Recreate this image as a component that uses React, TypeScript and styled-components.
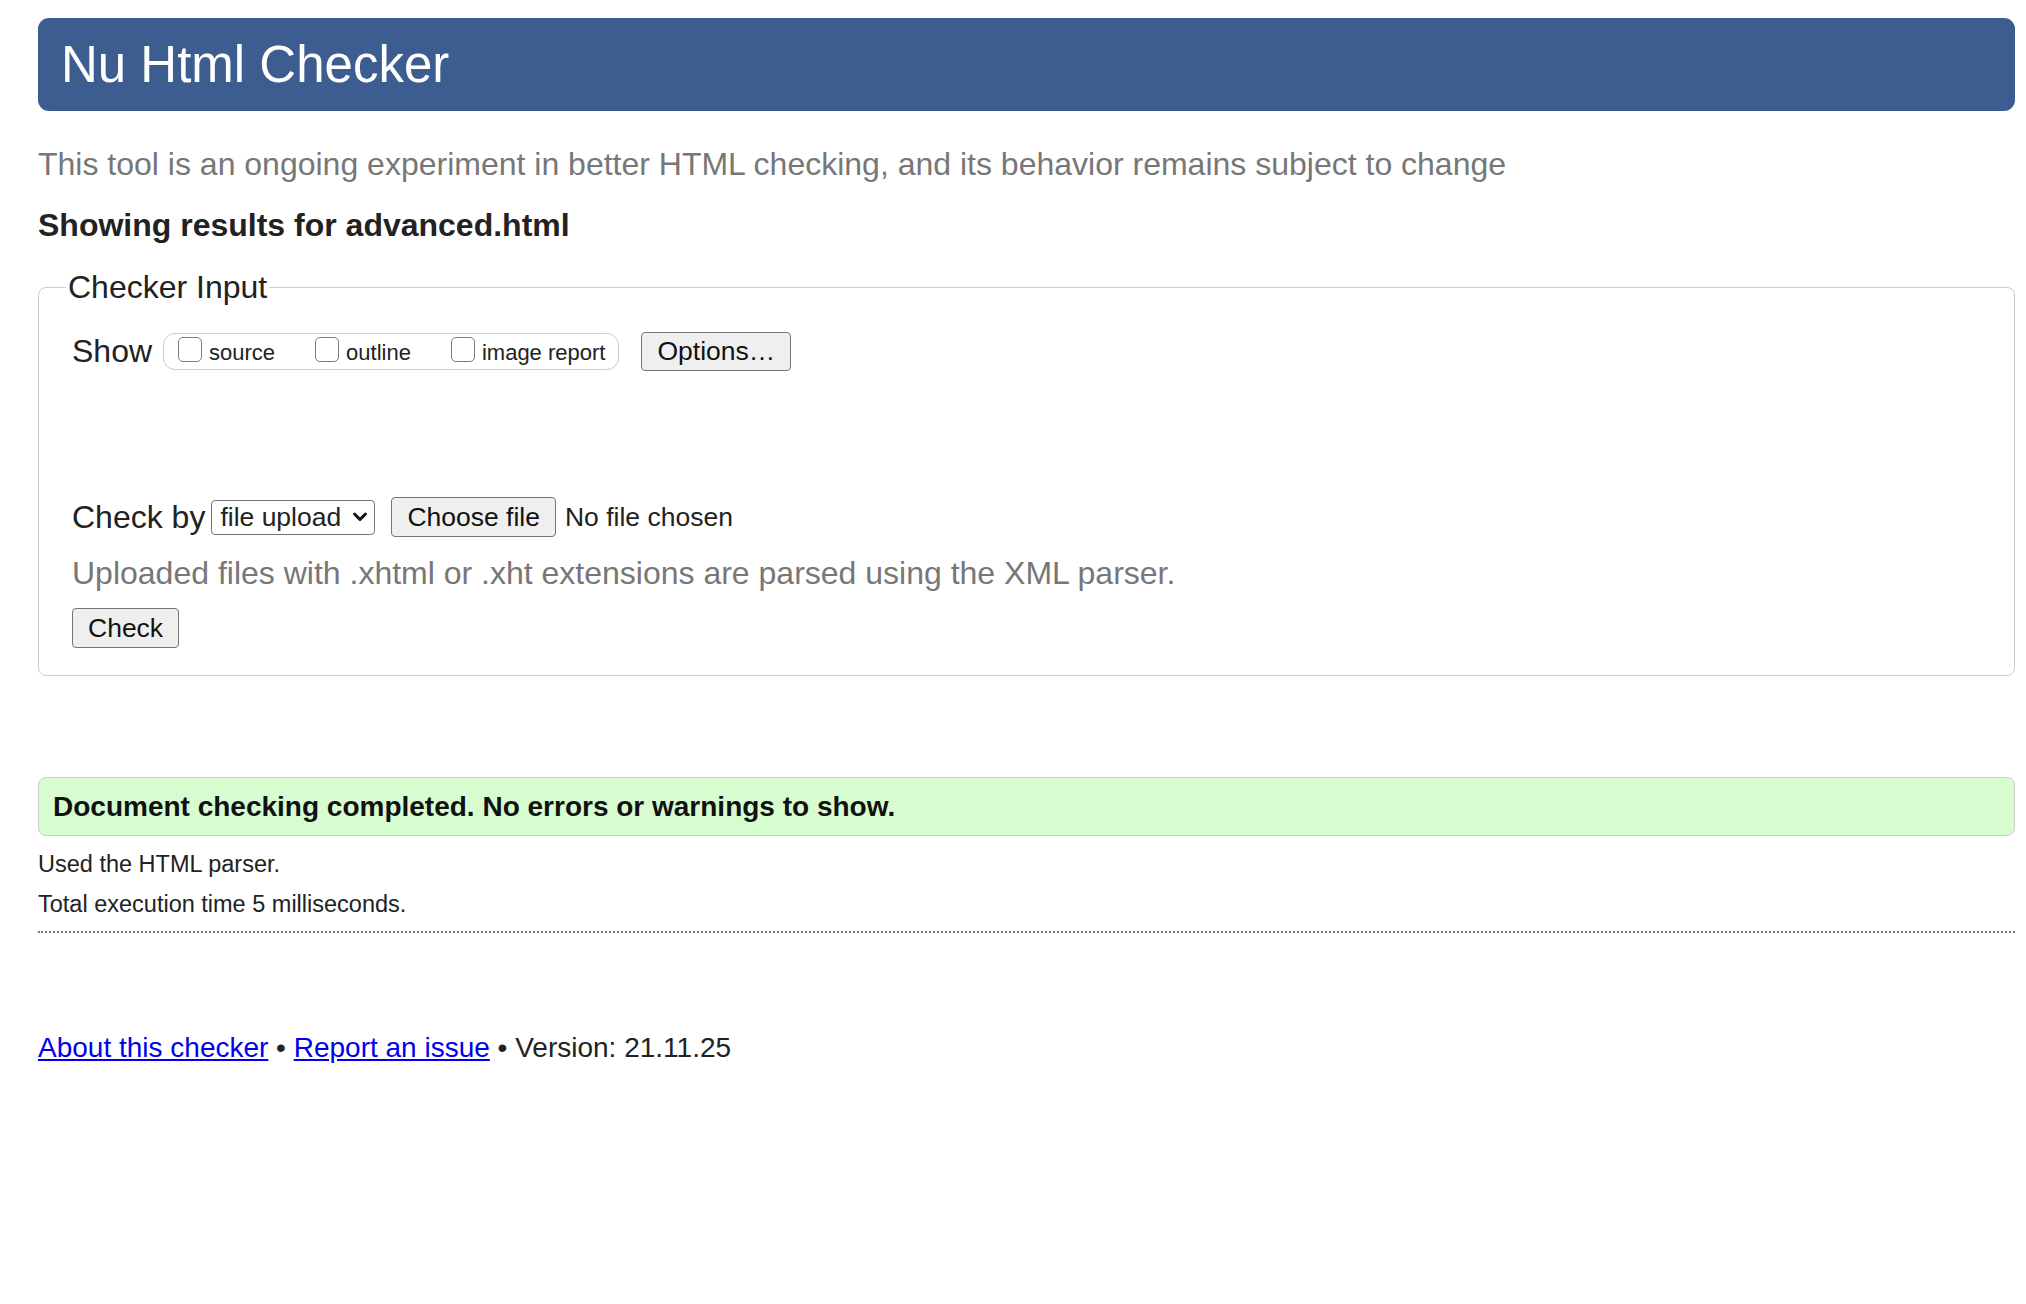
import styled, { createGlobalStyle } from 'styled-components'

const GlobalStyle = createGlobalStyle`
  html, body {
    margin: 0;
    padding: 0;
    background: #ffffff;
  }
  body {
    font-family: 'Liberation Sans', Arial, Helvetica, sans-serif;
    color: #222222;
  }
`

const Page = styled.div`
  padding: 18px 11px 60px 38px;
`

const TitleBar = styled.h1`
  margin: 0;
  height: 93px;
  display: flex;
  align-items: center;
  padding-left: 23px;
  background-color: #3d5d91;
  color: #ffffff;
  border-radius: 11px;
  font-size: 51px;
  font-weight: normal;
`

const Intro = styled.p`
  margin: 33px 0 0;
  font-size: 32px;
  line-height: 40px;
  color: #777777;
`

const ResultsFor = styled.h2`
  margin: 21px 0 0;
  font-size: 32px;
  line-height: 40px;
  font-weight: bold;
`

const InputSet = styled.fieldset`
  margin: 22px 0 0;
  padding: 0 33px 27px 33px;
  border: 1px solid #cccccc;
  border-radius: 8px;
`

const Legend = styled.legend`
  margin-left: -6px;
  padding: 0 2px;
  font-size: 32px;
  line-height: 40px;
`

const Row = styled.div<{ top: number }>`
  display: flex;
  align-items: center;
  margin-top: ${(p) => p.top}px;
  font-size: 32px;
  line-height: 40px;
`

const ShowGroup = styled.div`
  display: flex;
  align-items: center;
  height: 35px;
  margin-left: 11px;
  padding: 0 13px 0 14px;
  border: 1px solid #cccccc;
  border-radius: 12px;
`

const Option = styled.label<{ gap?: number }>`
  display: flex;
  align-items: center;
  margin-left: ${(p) => p.gap || 0}px;
  padding-top: 4px;
  font-size: 22px;
  line-height: 28px;
`

const Box = styled.input`
  appearance: none;
  width: 24px;
  height: 25px;
  margin: -8px 7px 0 0;
  border: 1.5px solid #7a7a7a;
  border-radius: 5px;
  background: #ffffff;
`

const Button = styled.button<{ gap?: number; h?: number }>`
  height: ${(p) => p.h || 40}px;
  margin-left: ${(p) => p.gap || 0}px;
  padding: 0 15px;
  background: #efefef;
  border: 1px solid #767676;
  border-radius: 4px;
  font-family: 'Liberation Sans', Arial, sans-serif;
  font-size: 26.5px;
  color: #111111;
`

const FakeSelect = styled.div`
  display: flex;
  align-items: center;
  justify-content: space-between;
  width: 164px;
  height: 35px;
  box-sizing: border-box;
  margin-left: 6px;
  padding: 0 5px 0 8px;
  border: 1px solid #767676;
  border-radius: 4px;
  background: #ffffff;
  font-size: 26.5px;
`

const FileName = styled.span`
  margin-left: 9px;
  font-size: 26.5px;
`

const Hint = styled.p`
  margin: 16px 0 0;
  font-size: 32px;
  line-height: 40px;
  color: #777777;
`

const CheckWrap = styled.div`
  margin-top: 15px;
`

const Success = styled.div`
  margin-top: 101px;
  height: 59px;
  box-sizing: border-box;
  display: flex;
  align-items: center;
  padding-left: 14px;
  background-color: #d6fcd0;
  border: 1px solid #cccccc;
  border-radius: 8px;
  font-size: 28px;
  font-weight: bold;
  color: #111111;
`

const Note = styled.p<{ top: number }>`
  margin: ${(p) => p.top}px 0 0;
  font-size: 23.5px;
  line-height: 30px;
`

const Divider = styled.hr`
  margin: 12px 0 0;
  border: 0;
  border-top: 2px dotted #777777;
`

const Footer = styled.p`
  margin: 97px 0 0;
  font-size: 28px;
  line-height: 36px;
  color: #222222;
`

const Link = styled.a`
  color: #0000ee;
  text-decoration: underline;
`

const Chevron = () => (
  <svg width='18' height='14' viewBox='0 0 18 14'>
    <path d='M3.5 4 L9 9.5 L14.5 4' fill='none' stroke='#111' strokeWidth='3' strokeLinecap='round' strokeLinejoin='round' />
  </svg>
)

const App = () => {
  return (
    <>
      <GlobalStyle />
      <Page>
        <TitleBar>Nu Html Checker</TitleBar>
        <Intro>
          This tool is an ongoing experiment in better HTML checking, and its behavior remains subject to change
        </Intro>
        <ResultsFor>Showing results for advanced.html</ResultsFor>

        <InputSet>
          <Legend>Checker Input</Legend>
          <Row top={24}>
            Show
            <ShowGroup>
              <Option>
                <Box type='checkbox' />
                source
              </Option>
              <Option gap={40}>
                <Box type='checkbox' />
                outline
              </Option>
              <Option gap={40}>
                <Box type='checkbox' />
                image report
              </Option>
            </ShowGroup>
            <Button gap={22} h={39}>Options…</Button>
          </Row>
          <Row top={126}>
            Check by
            <FakeSelect>
              file upload
              <Chevron />
            </FakeSelect>
            <Button gap={16}>Choose file</Button>
            <FileName>No file chosen</FileName>
          </Row>
          <Hint>Uploaded files with .xhtml or .xht extensions are parsed using the XML parser.</Hint>
          <CheckWrap>
            <Button>Check</Button>
          </CheckWrap>
        </InputSet>

        <Success>Document checking completed. No errors or warnings to show.</Success>
        <Note top={13}>Used the HTML parser.</Note>
        <Note top={10}>Total execution time 5 milliseconds.</Note>
        <Divider />
        <Footer>
          <Link href='#'>About this checker</Link> • <Link href='#'>Report an issue</Link> • Version: 21.11.25
        </Footer>
      </Page>
    </>
  )
}

export default App
